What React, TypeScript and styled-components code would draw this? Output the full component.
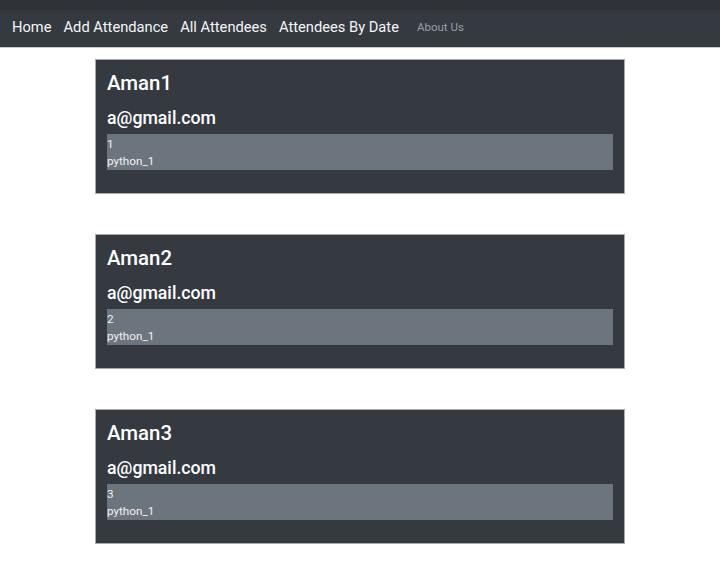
import React from "react";
import styled, { createGlobalStyle } from "styled-components";

const Global = createGlobalStyle`
  html, body { margin: 0; padding: 0; background: #fff; }
  body { font-family: Roboto, "Noto Sans", sans-serif; }
`;

const NavBar = styled.nav`
  display: flex;
  align-items: center;
  gap: 12px;
  height: 48px;
  padding: 6px 12px 0;
  box-sizing: border-box;
  background: linear-gradient(#2f3337 0, #2f3337 9px, #343a40 11px, #343a40 100%);
  border-bottom: 1px solid #c8c8c8;
`;

const NavLink = styled.span<{ $muted?: boolean }>`
  color: ${(p) => (p.$muted ? "#9a9ea3" : "#f4f5f6")};
  font-size: ${(p) => (p.$muted ? "11.5px" : "14.7px")};
  margin-left: ${(p) => (p.$muted ? "6px" : "0")};
  white-space: nowrap;
`;

const List = styled.main`
  display: flex;
  flex-direction: column;
  align-items: center;
  gap: 40px;
  padding-top: 11px;
`;

const Card = styled.section`
  width: 530px;
  height: 135px;
  box-sizing: border-box;
  background: #343a40;
  border: 1px solid #a8abae;
  padding: 10px 11px 0;
  display: flex;
  flex-direction: column;
`;

const Name = styled.div`
  color: #fff;
  font-size: 20.4px;
  font-weight: 500;
  line-height: 26px;
`;

const Email = styled.div`
  color: #fff;
  font-size: 17.7px;
  font-weight: 500;
  line-height: 24px;
  margin-top: 10px;
`;

const Detail = styled.div`
  background: #6c757d;
  color: #f0f1f2;
  font-size: 11.7px;
  line-height: 17px;
  height: 36px;
  box-sizing: border-box;
  padding-top: 2px;
  margin-top: 4px;
`;

const people = [
  { name: "Aman1", email: "a@gmail.com", id: "1", course: "python_1" },
  { name: "Aman2", email: "a@gmail.com", id: "2", course: "python_1" },
  { name: "Aman3", email: "a@gmail.com", id: "3", course: "python_1" },
];

export default function App() {
  return (
    <>
      <Global />
      <NavBar>
        <NavLink>Home</NavLink>
        <NavLink>Add Attendance</NavLink>
        <NavLink>All Attendees</NavLink>
        <NavLink>Attendees By Date</NavLink>
        <NavLink $muted>About Us</NavLink>
      </NavBar>
      <List>
        {people.map((p) => (
          <Card key={p.name}>
            <Name>{p.name}</Name>
            <Email>{p.email}</Email>
            <Detail>
              <div>{p.id}</div>
              <div>{p.course}</div>
            </Detail>
          </Card>
        ))}
      </List>
    </>
  );
}
